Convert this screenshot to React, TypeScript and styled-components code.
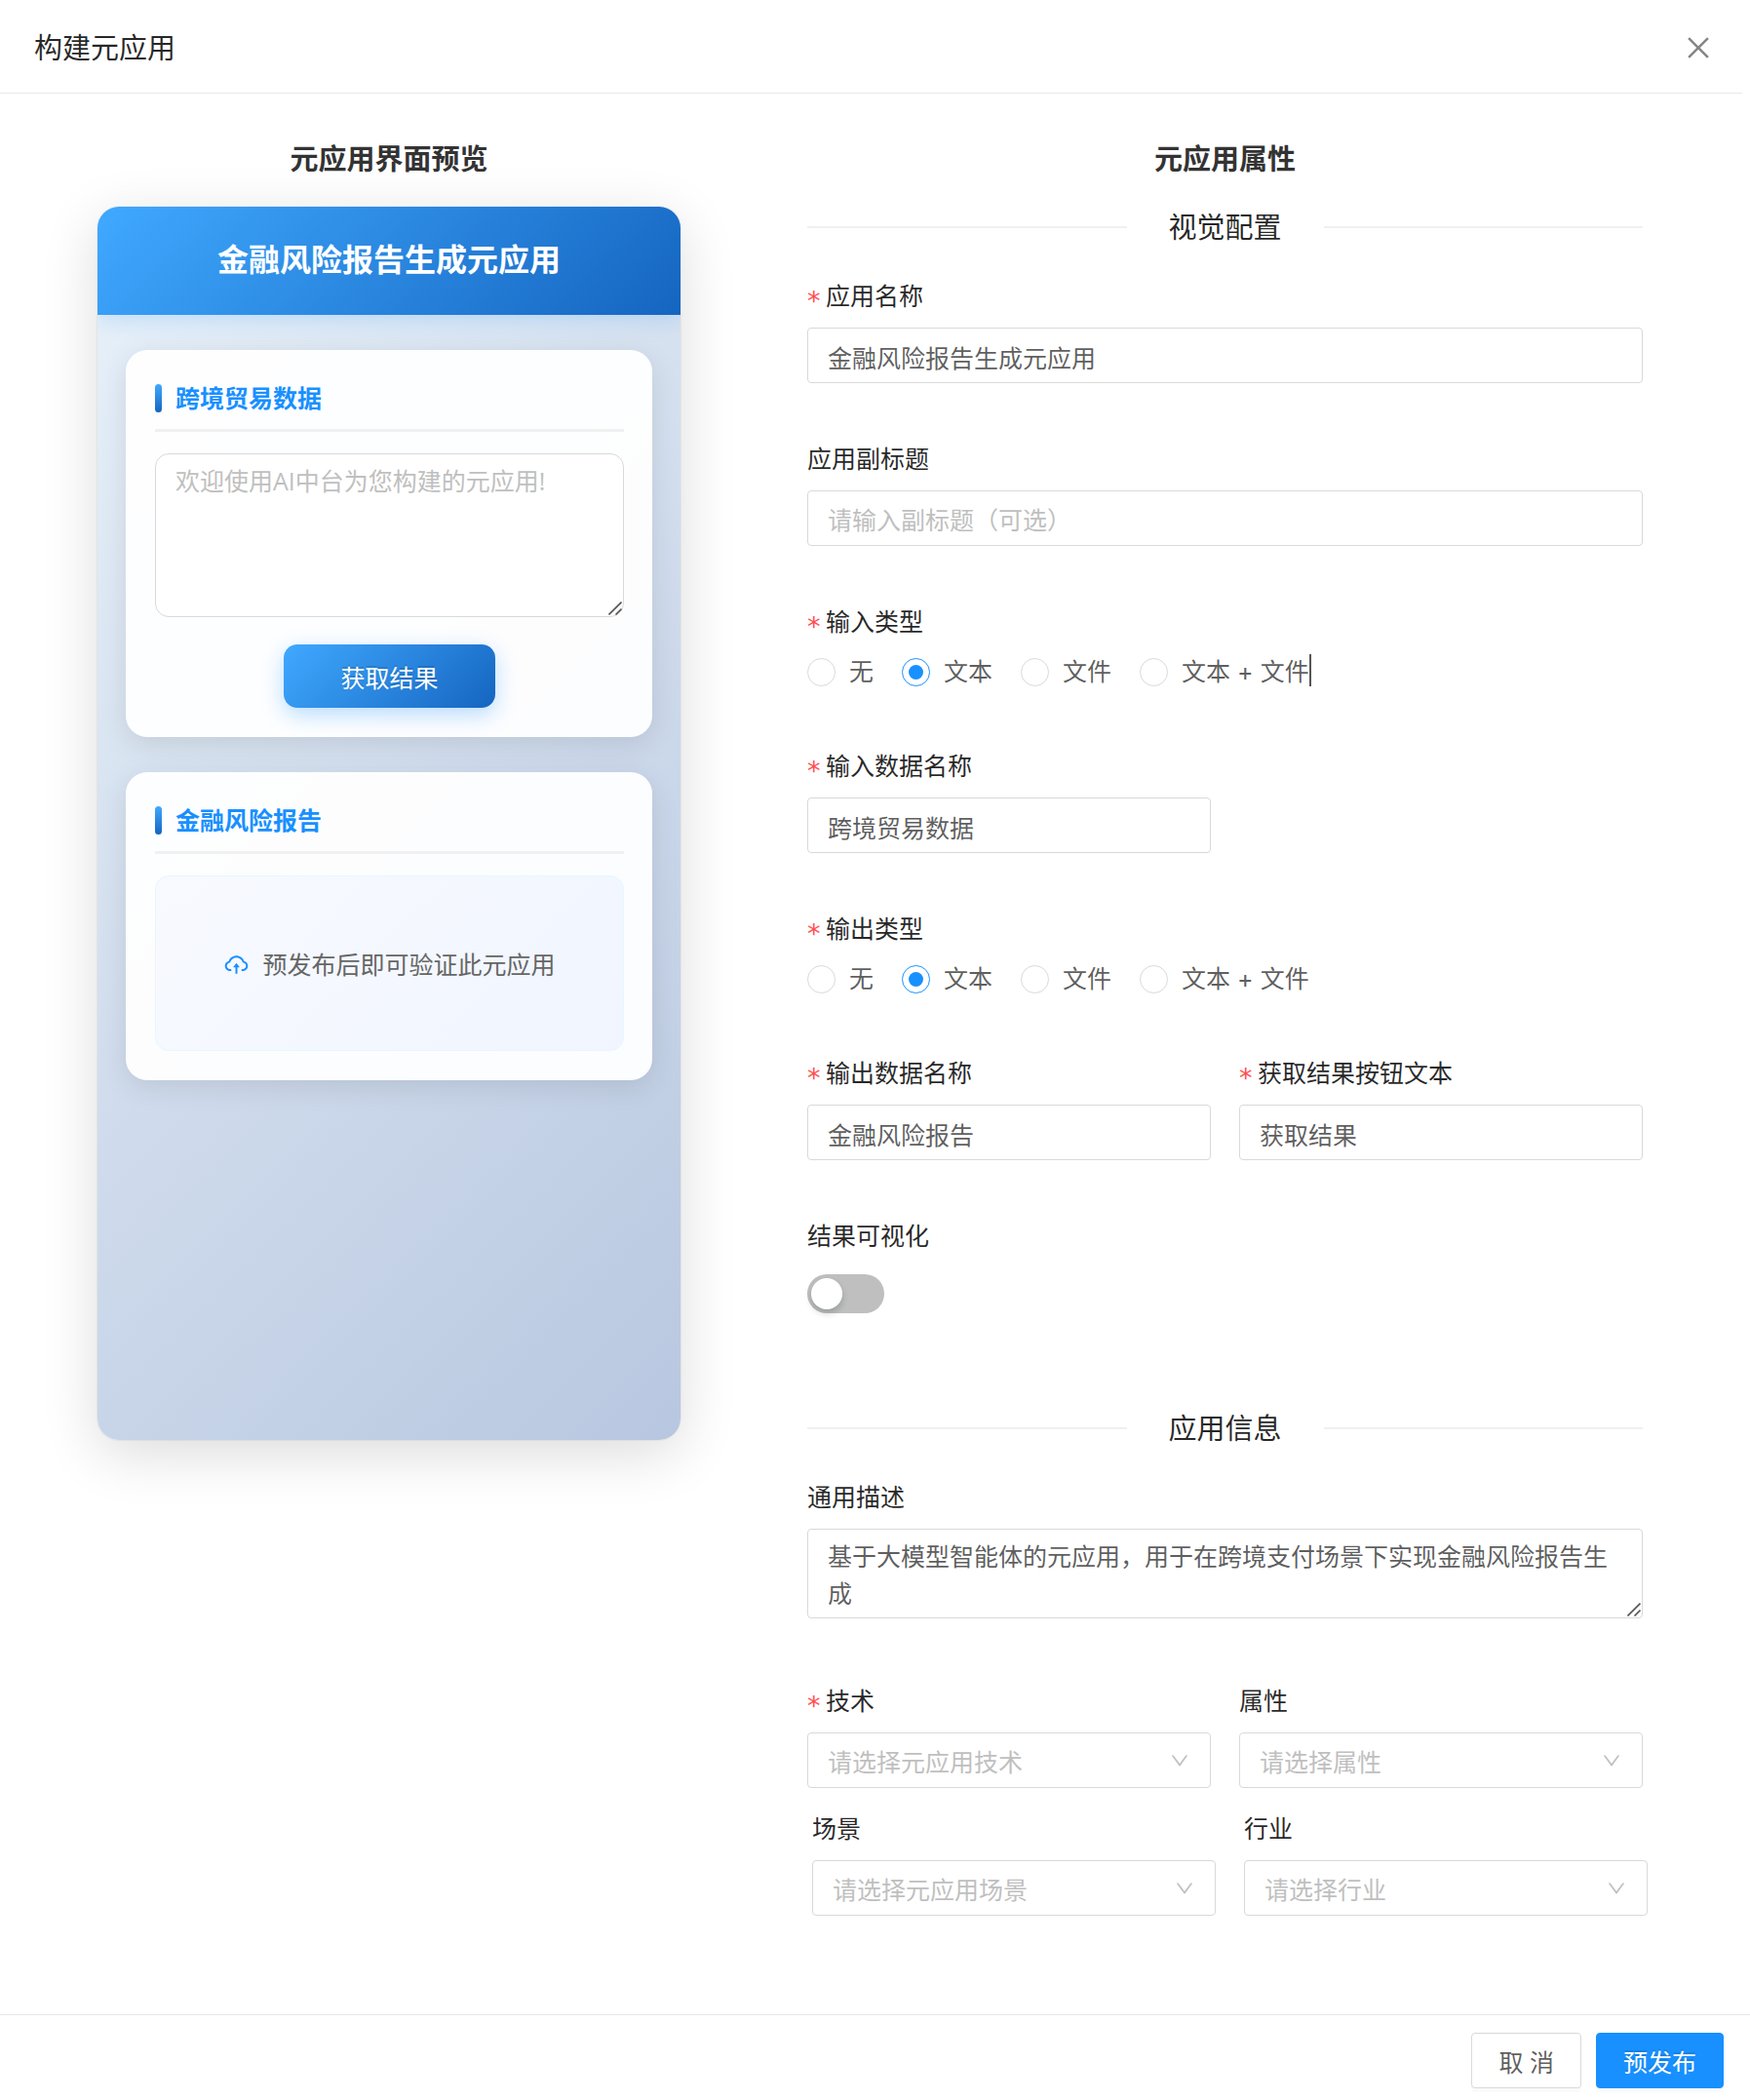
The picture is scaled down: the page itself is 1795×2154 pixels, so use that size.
import React, { useState } from "react";
import styled, { createGlobalStyle, css } from "styled-components";
import { AiOutlineClose, AiOutlineCloudUpload, AiOutlineDown } from "react-icons/ai";

const GlobalStyle = createGlobalStyle`
  *, *::before, *::after { box-sizing: border-box; }
  body {
    margin: 0;
    background: #fff;
    color: rgba(0, 0, 0, 0.85);
    font-family: "Open Sans", "Noto Sans CJK SC", sans-serif;
    font-size: 25px;
    line-height: 40px;
  }
  button, input, textarea, select { font: inherit; color: inherit; margin: 0; }
`;

const Modal = styled.div`
  display: flex;
  flex-direction: column;
  min-height: 100vh;
`;

const ModalHeader = styled.header`
  display: flex;
  align-items: center;
  justify-content: space-between;
  height: 96px;
  margin-right: 8px;
  padding: 2px 29px 0 35px;
  border-bottom: 1px solid #e8e8e8;
`;

const ModalTitle = styled.h1`
  margin: 0;
  font-size: 29px;
  line-height: 45px;
  font-weight: 400;
`;

const CloseButton = styled.button`
  display: flex;
  padding: 0;
  border: 0;
  background: none;
  color: #868686;
  font-size: 32px;
  cursor: pointer;
`;

const ModalBody = styled.main`
  flex: 1;
  display: grid;
  grid-template-columns: minmax(0, 598fr) minmax(0, 857fr);
  column-gap: 130px;
  align-items: start;
  padding: 44px 110px 58px 100px;
`;

const ColumnTitle = styled.h2`
  margin: 0;
  color: #333;
  font-size: 29px;
  line-height: 45px;
  font-weight: 700;
  text-align: center;
`;

const Phone = styled.div`
  min-height: 1265px;
  margin-top: 27px;
  border-radius: 22px;
  overflow: hidden;
  background: linear-gradient(135deg, #e9f2fa 0%, #b8c7e0 100%);
  box-shadow: 0 0 0 1px rgba(0, 0, 0, 0.04), 0 14px 58px rgba(0, 0, 0, 0.14);
`;

const PhoneHeader = styled.div`
  padding: 28px 30px 32px;
  background: linear-gradient(135deg, #40a9ff 0%, #1565c0 100%);
  box-shadow: 0 4px 22px rgba(24, 144, 255, 0.2);
  color: #fff;
  font-size: 32px;
  line-height: 51px;
  font-weight: 700;
  text-align: center;
`;

const PhoneBody = styled.div`
  display: flex;
  flex-direction: column;
  gap: 36px;
  padding: 36px 29px;
`;

const Panel = styled.section`
  display: flex;
  flex-direction: column;
  padding: 29px 29px 30px 30px;
  border-radius: 22px;
  background: rgba(255, 255, 255, 0.94);
  box-shadow: 0 7px 29px rgba(0, 0, 0, 0.1);
`;

const PanelTitle = styled.h3`
  display: flex;
  align-items: center;
  gap: 14px;
  margin: 0 0 22px;
  padding-bottom: 12px;
  border-bottom: 3px solid #f0f0f0;
  color: #1890ff;
  font-size: 25px;
  line-height: 40px;
  font-weight: 700;

  &::before {
    content: "";
    width: 7px;
    height: 29px;
    border-radius: 4px;
    background: linear-gradient(180deg, #40a9ff, #1565c0);
  }
`;

const ResizableBox = styled.div`
  position: relative;
  display: flex;
`;

const ResizeMark = styled.svg`
  position: absolute;
  right: 2px;
  bottom: 2px;
  width: 14px;
  height: 14px;
  pointer-events: none;
`;

const fieldStyle = css`
  width: 100%;
  border: 1px solid #d9d9d9;
  border-radius: 4px;
  background: #fff;
  color: rgba(0, 0, 0, 0.65);
  outline: none;

  &::placeholder {
    color: #bfbfbf;
    opacity: 1;
  }
`;

const TextArea = styled.textarea<{ $tall?: boolean }>`
  ${fieldStyle}
  display: block;
  height: ${(p) => (p.$tall ? 168 : 92)}px;
  padding: 8px 20px;
  border-radius: ${(p) => (p.$tall ? 14 : 4)}px;
  line-height: 38px;
  resize: none;
  overflow: hidden;
`;

const ResultButton = styled.button`
  align-self: center;
  margin-top: 28px;
  padding: 14px 58px 11px;
  border: 0;
  border-radius: 14px;
  background: linear-gradient(135deg, #40a9ff 0%, #1565c0 100%);
  box-shadow: 0 7px 22px rgba(24, 144, 255, 0.3);
  color: #fff;
  text-shadow: 0 -2px 0 rgba(0, 0, 0, 0.12);
  cursor: pointer;
`;

const ResultPlaceholder = styled.div`
  display: flex;
  align-items: center;
  justify-content: center;
  gap: 13px;
  height: 180px;
  padding-top: 2px;
  border: 1px solid #e6f7ff;
  border-radius: 14px;
  background: linear-gradient(135deg, #f8faff 0%, #f0f5ff 100%);
  color: #666;

  svg {
    color: #1890ff;
    font-size: 27px;
  }
`;

const SectionDivider = styled.div<{ $gapTop: number }>`
  display: flex;
  align-items: center;
  gap: 43px;
  margin: ${(p) => p.$gapTop}px 0 28px;
  font-size: 29px;
  line-height: 45px;

  &::before, &::after {
    content: "";
    flex: 1;
    height: 2px;
    background: #f0f0f0;
  }
`;

const Form = styled.form`
  display: flex;
  flex-direction: column;
`;

const FieldRow = styled.div<{ $gap?: number; $inset?: boolean }>`
  display: grid;
  grid-template-columns: 1fr 1fr;
  column-gap: 29px;
  margin-bottom: ${(p) => p.$gap ?? 57}px;
  ${(p) => p.$inset && "margin-left: 5px; margin-right: -5px;"}
`;

const Item = styled.div<{ $gap?: number }>`
  min-width: 0;
  margin-bottom: ${(p) => p.$gap ?? 57}px;

  ${FieldRow} > & { margin-bottom: 0; }
`;

const labelStyle = css`
  display: flex;
  height: 40px;
  margin-bottom: 13px;
`;

const Label = styled.label`${labelStyle}`;
const GroupLabel = styled.div`${labelStyle}`;

const Star = styled.span`
  width: 13px;
  margin-right: 6px;
  padding-top: 6px;
  color: #ff4d4f;
  font-family: "DejaVu Sans", sans-serif;
  font-size: 27px;
`;

const TextInput = styled.input`
  ${fieldStyle}
  display: block;
  height: 57px;
  padding: 2px 20px 0;
`;

const RadioRow = styled.div`
  display: flex;
  gap: 29px;
  height: 38px;
`;

const RadioLabel = styled.label`
  position: relative;
  display: flex;
  align-items: center;
  gap: 14px;
  color: rgba(0, 0, 0, 0.65);
  font-family: Inter, "Noto Sans CJK SC", sans-serif;
  white-space: pre;
  cursor: pointer;
`;

const Radio = styled.input`
  appearance: none;
  display: grid;
  place-items: center;
  width: 29px;
  height: 29px;
  margin: 0;
  border: 1px solid #d9d9d9;
  border-radius: 50%;
  background: #fff;

  &:checked { border-color: #1890ff; }
  &:checked::before {
    content: "";
    width: 15px;
    height: 15px;
    border-radius: 50%;
    background: #1890ff;
  }
`;

const Caret = styled.span`
  position: absolute;
  left: 100%;
  top: 1px;
  width: 2px;
  height: 33px;
  background: #555;
`;

const SwitchLine = styled.div`
  display: flex;
  align-items: center;
  height: 54px;
`;

const Switch = styled.button<{ $on: boolean }>`
  display: flex;
  justify-content: ${(p) => (p.$on ? "flex-end" : "flex-start")};
  align-items: center;
  width: 79px;
  height: 40px;
  padding: 0 4px;
  border: 0;
  border-radius: 20px;
  background: ${(p) => (p.$on ? "#1890ff" : "#bfbfbf")};
  cursor: pointer;

  &::before {
    content: "";
    width: 32px;
    height: 32px;
    border-radius: 50%;
    background: #fff;
    box-shadow: 0 4px 7px rgba(0, 35, 11, 0.2);
  }
`;

const SelectBox = styled.div`
  position: relative;
  color: #bfbfbf;

  svg {
    position: absolute;
    right: 21px;
    top: 18px;
    font-size: 22px;
    pointer-events: none;
  }
`;

const Select = styled.select`
  ${fieldStyle}
  appearance: none;
  display: block;
  height: 57px;
  padding: 2px 50px 0 20px;
  color: #bfbfbf;
`;

const ModalFooter = styled.footer`
  display: flex;
  justify-content: flex-end;
  gap: 15px;
  padding: 18px 27px 12px;
  border-top: 1px solid #e8e8e8;
`;

const FooterButton = styled.button<{ $primary?: boolean }>`
  height: 57px;
  padding: 2px 27px 0;
  border: 1px solid ${(p) => (p.$primary ? "#1890ff" : "#d9d9d9")};
  border-radius: 4px;
  background: ${(p) => (p.$primary ? "#1890ff" : "#fff")};
  box-shadow: 0 4px 0 rgba(0, 0, 0, 0.02);
  color: ${(p) => (p.$primary ? "#fff" : "rgba(0, 0, 0, 0.65)")};
  text-shadow: ${(p) => (p.$primary ? "0 -2px 0 rgba(0, 0, 0, 0.12)" : "none")};
  cursor: pointer;
`;

const TYPES = ["无", "文本", "文件", "文本 + 文件"];

function ResizeHandle() {
  return (
    <ResizeMark viewBox="0 0 14 14" fill="none" stroke="#555" strokeWidth="1.6" aria-hidden="true">
      <path d="M0.5 13.5 13.5 0.5M7.5 13.5 13.5 7.5" />
    </ResizeMark>
  );
}

interface FieldProps {
  id: string;
  label: string;
  required?: boolean;
  children: React.ReactNode;
  gap?: number;
}

function Field({ id, label, required, children, gap }: FieldProps) {
  return (
    <Item $gap={gap}>
      <Label htmlFor={id}>
        {required && <Star>*</Star>}
        {label}
      </Label>
      {children}
    </Item>
  );
}

interface TypeFieldProps {
  name: string;
  label: string;
  value: string;
  onChange: (value: string) => void;
  caret?: boolean;
}

function TypeField({ name, label, value, onChange, caret }: TypeFieldProps) {
  return (
    <Item role="radiogroup" aria-labelledby={`${name}-label`}>
      <GroupLabel id={`${name}-label`}>
        <Star>*</Star>
        {label}
      </GroupLabel>
      <RadioRow>
        {TYPES.map((type, index) => (
          <RadioLabel key={type}>
            <Radio type="radio" name={name} checked={value === type} onChange={() => onChange(type)} />
            {type}
            {caret && index === TYPES.length - 1 && <Caret />}
          </RadioLabel>
        ))}
      </RadioRow>
    </Item>
  );
}

function SelectField({ id, label, required, placeholder }: { id: string; label: string; required?: boolean; placeholder: string }) {
  return (
    <Field id={id} label={label} required={required}>
      <SelectBox>
        <Select id={id} defaultValue="">
          <option value="">{placeholder}</option>
        </Select>
        <AiOutlineDown aria-hidden="true" />
      </SelectBox>
    </Field>
  );
}

export default function App() {
  const [name, setName] = useState("金融风险报告生成元应用");
  const [inputType, setInputType] = useState("文本");
  const [inputName, setInputName] = useState("跨境贸易数据");
  const [outputType, setOutputType] = useState("文本");
  const [outputName, setOutputName] = useState("金融风险报告");
  const [buttonText, setButtonText] = useState("获取结果");
  const [visual, setVisual] = useState(false);

  return (
    <>
      <GlobalStyle />
      <Modal>
        <ModalHeader>
          <ModalTitle>构建元应用</ModalTitle>
          <CloseButton type="button" aria-label="关闭">
            <AiOutlineClose />
          </CloseButton>
        </ModalHeader>

        <ModalBody>
          <section>
            <ColumnTitle>元应用界面预览</ColumnTitle>
            <Phone>
              <PhoneHeader>{name}</PhoneHeader>
              <PhoneBody>
                <Panel>
                  <PanelTitle>{inputName}</PanelTitle>
                  <ResizableBox>
                    <TextArea $tall aria-label={inputName} placeholder="欢迎使用AI中台为您构建的元应用!" />
                    <ResizeHandle />
                  </ResizableBox>
                  <ResultButton type="button">{buttonText}</ResultButton>
                </Panel>
                <Panel>
                  <PanelTitle>{outputName}</PanelTitle>
                  <ResultPlaceholder>
                    <AiOutlineCloudUpload aria-hidden="true" />
                    预发布后即可验证此元应用
                  </ResultPlaceholder>
                </Panel>
              </PhoneBody>
            </Phone>
          </section>

          <section>
            <ColumnTitle>元应用属性</ColumnTitle>
            <Form>
              <SectionDivider $gapTop={25}>视觉配置</SectionDivider>
              <Field id="name" label="应用名称" required>
                <TextInput id="name" value={name} onChange={(e) => setName(e.target.value)} />
              </Field>
              <Field id="subtitle" label="应用副标题">
                <TextInput id="subtitle" placeholder="请输入副标题（可选）" />
              </Field>
              <TypeField name="input-type" label="输入类型" value={inputType} onChange={setInputType} caret />
              <FieldRow>
                <Field id="input-name" label="输入数据名称" required>
                  <TextInput id="input-name" value={inputName} onChange={(e) => setInputName(e.target.value)} />
                </Field>
              </FieldRow>
              <TypeField name="output-type" label="输出类型" value={outputType} onChange={setOutputType} />
              <FieldRow>
                <Field id="output-name" label="输出数据名称" required>
                  <TextInput id="output-name" value={outputName} onChange={(e) => setOutputName(e.target.value)} />
                </Field>
                <Field id="button-text" label="获取结果按钮文本" required>
                  <TextInput id="button-text" value={buttonText} onChange={(e) => setButtonText(e.target.value)} />
                </Field>
              </FieldRow>
              <Field id="visual" label="结果可视化">
                <SwitchLine>
                  <Switch
                    id="visual"
                    type="button"
                    role="switch"
                    aria-checked={visual}
                    $on={visual}
                    onClick={() => setVisual(!visual)}
                  />
                </SwitchLine>
              </Field>

              <SectionDivider $gapTop={31}>应用信息</SectionDivider>
              <Field id="description" label="通用描述" gap={64}>
                <ResizableBox>
                  <TextArea
                    id="description"
                    defaultValue="基于大模型智能体的元应用，用于在跨境支付场景下实现金融风险报告生成"
                  />
                  <ResizeHandle />
                </ResizableBox>
              </Field>
              <FieldRow $gap={21}>
                <SelectField id="tech" label="技术" required placeholder="请选择元应用技术" />
                <SelectField id="attribute" label="属性" placeholder="请选择属性" />
              </FieldRow>
              <FieldRow $gap={0} $inset>
                <SelectField id="scene" label="场景" placeholder="请选择元应用场景" />
                <SelectField id="industry" label="行业" placeholder="请选择行业" />
              </FieldRow>
            </Form>
          </section>
        </ModalBody>

        <ModalFooter>
          <FooterButton type="button">取 消</FooterButton>
          <FooterButton type="button" $primary>
            预发布
          </FooterButton>
        </ModalFooter>
      </Modal>
    </>
  );
}
